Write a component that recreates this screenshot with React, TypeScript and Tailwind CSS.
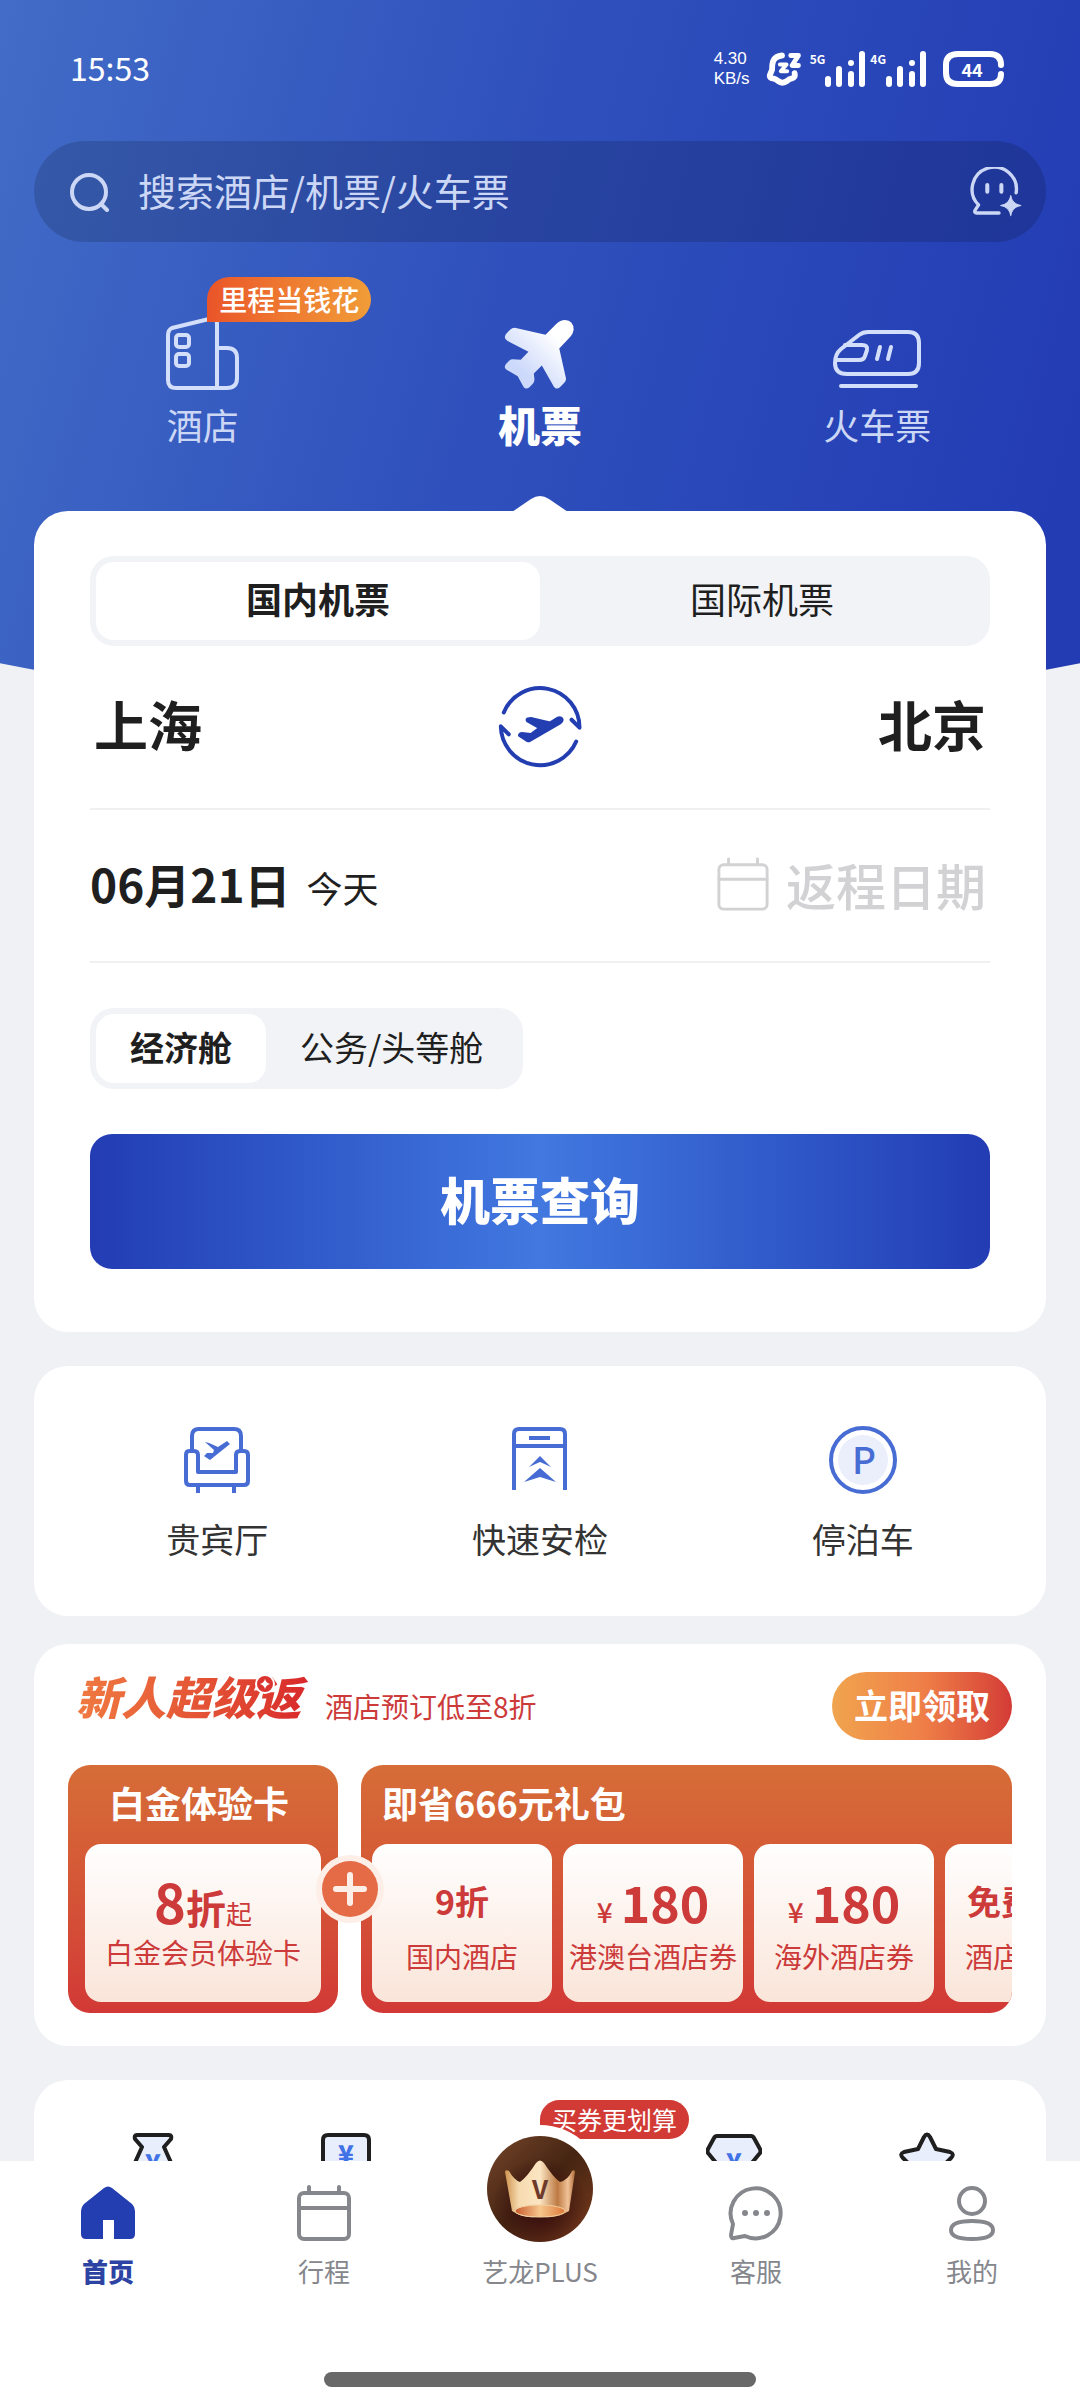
import type { ReactNode } from "react";
import { useState } from "react";

const StatusBar = () => {
  return (
    <div className="flex h-[141px] items-center justify-between pr-[41px] pb-1 pl-9 text-white">
      <span className="pb-1 text-[32px] leading-10">15:53</span>

      <div className="flex items-center">
        <div className="mr-3 w-10 font-['Liberation_Sans',sans-serif] text-[17px] leading-5 whitespace-nowrap">
          <div>4.30</div>
          <div>KB/s</div>
        </div>
        <svg
          viewBox="222 62 112 112"
          className="mr-2 size-9"
          fill="none"
          stroke="currentColor"
          strokeWidth="18"
          strokeLinecap="round"
          strokeLinejoin="round"
        >
          <path d="M272 76C240 79 241 104 241 120L234 137Q232 147 246 148Q254 150 259 155Q273 166 288 155Q293 149 303 147Q314 145 311 131" />
          <path d="M265 104H286L268 125H288" strokeWidth="12" />
          <path d="M299 76H323L303 107H323" strokeWidth="15" />
        </svg>
        <Signal label="5G" />
        <Signal label="4G" />
        <div className="relative ml-3 flex h-9 w-[62px] items-center justify-center">
          <svg
            viewBox="0 0 62 36"
            className="absolute inset-0 size-full"
            fill="none"
            stroke="currentColor"
            strokeWidth="6"
            strokeLinecap="round"
          >
            <path d="M58 14Q58 3 47 3H15Q3 3 3 14V22Q3 33 15 33H47Q58 33 58 23" />
          </svg>
          <span className="pr-1 text-lg leading-5 font-bold">44</span>
        </div>
      </div>
    </div>
  );
};

const Signal = ({ label }: { label: string }) => {
  return (
    <div className="mr-1 flex h-9 items-start">
      <span className="text-[12px] leading-4 font-bold">{label}</span>
      <svg viewBox="0 0 41 36" className="h-9 w-[41px]" fill="currentColor">
        <rect x="0" y="25" width="6" height="11" rx="3" />
        <rect x="11" y="15" width="6" height="21" rx="3" />
        <rect x="23" y="20" width="6" height="16" rx="3" />
        <circle cx="26" cy="12" r="3" />
        <rect x="34" y="0" width="6" height="36" rx="3" />
      </svg>
    </div>
  );
};

const SearchBar = () => {
  return (
    <label className="flex h-[101px] items-center rounded-full bg-black/15 pr-6 pl-9 text-[#ccd7f5]">
      <svg
        viewBox="0 0 40 40"
        className="size-10 shrink-0"
        fill="none"
        stroke="currentColor"
        strokeWidth="4"
        strokeLinecap="round"
      >
        <circle cx="19" cy="20" r="17" />
        <path d="M31 32L37 38" />
      </svg>
      <input
        type="search"
        aria-label="搜索"
        placeholder="搜索酒店/机票/火车票"
        className="ml-7 min-w-0 flex-1 bg-transparent pb-1 text-[38px] leading-[56px] outline-none placeholder:text-[#ccd7f5]"
      />
      <svg
        viewBox="843 410 154 149"
        className="h-[50px] w-[52px] shrink-0"
        fill="none"
        stroke="currentColor"
        strokeWidth="10"
        strokeLinecap="round"
        strokeLinejoin="round"
      >
        <path d="M980 487A66 66 0 1 0 868 523L857 540Q855 547 862 547H929" />
        <path d="M894 464V484M936 464V484" strokeWidth="12" />
        <path
          d="M964 495Q968 521 994 525Q968 529 964 555Q960 529 934 525Q960 521 964 495Z"
          fill="currentColor"
          strokeWidth="3"
        />
      </svg>
    </label>
  );
};

const HotelIcon = () => (
  <svg viewBox="0 0 73 74" className="h-[74px] w-[73px]" fill="none" stroke="#d3defa" strokeWidth="4">
    <path d="M2 19Q2 14 6 12L43 3Q51 1 51 8V72H10Q2 72 2 64Z" strokeLinejoin="round" />
    <path d="M51 32H61Q71 32 71 42V62Q71 72 61 72H51" />
    <rect x="10" y="19" width="13" height="12" rx="3" />
    <rect x="10" y="38" width="13" height="12" rx="3" />
  </svg>
);

const PlaneIcon = () => (
  <svg viewBox="190 53 212 212" className="size-[71px]">
    <defs>
      <linearGradient id="plane" x1="1" y1="0" x2="0" y2="1">
        <stop offset="0.25" stopColor="#ffffff" />
        <stop offset="0.75" stopColor="#cdd9fb" />
      </linearGradient>
    </defs>
    <path
      d="M346 68Q358 56 372 56Q398 58 398 85Q396 98 388 106L355 141L375 230Q376 238 370 243L357 257Q346 265 339 255L303 192L279 216L281 234Q281 241 276 246L266 257Q255 265 248 255L231 224L200 206Q187 199 196 187L206 177Q210 173 216 173L240 175L263 151L201 119Q187 111 196 98L209 84Q214 79 222 79L314 100Z"
      fill="url(#plane)"
    />
  </svg>
);

const TrainIcon = () => (
  <svg
    viewBox="831 326 90 62"
    className="h-[62px] w-[90px]"
    fill="none"
    stroke="#d3defa"
    strokeWidth="4"
    strokeLinecap="round"
    strokeLinejoin="round"
  >
    <path d="M867 330H907Q918 330 918 341V361Q918 372 907 372H846Q834 372 834 361Q834 352 840 347L858 333Q862 330 867 330Z" />
    <path d="M844 343H861Q867 343 866 348L864 354Q863 358 858 358H836" />
    <path d="M879 345L876 357M890 345L887 357" />
    <path d="M840 384H915" />
  </svg>
);

const products = [
  { name: "酒店", icon: <HotelIcon />, badge: "里程当钱花" },
  { name: "机票", icon: <PlaneIcon />, active: true },
  { name: "火车票", icon: <TrainIcon /> },
];

const ProductTabs = () => {
  return (
    <nav className="grid grid-cols-3 pt-[76px]">
      {products.map((item) => (
        <a key={item.name} href="#search" className="flex flex-col items-center">
          <div className="relative flex h-[72px] items-end">
            {item.icon}
            {item.badge && (
              <span className="absolute -top-[41px] left-[41px] rounded-full rounded-bl-md bg-linear-to-r from-[#ea5429] to-[#f09c38] px-3 text-[28px] leading-[45px] font-medium whitespace-nowrap text-white">
                {item.badge}
              </span>
            )}
          </div>
          <span
            className={
              item.active
                ? "mt-2.5 text-[42px] leading-12 font-black text-white"
                : "mt-2.5 text-[36px] leading-12 text-[#ccd7f5]"
            }
          >
            {item.name}
          </span>
        </a>
      ))}
    </nav>
  );
};

const CalendarIcon = ({ className, strokeWidth }: { className: string; strokeWidth: number }) => (
  <svg
    viewBox="0 0 56 56"
    className={className}
    fill="none"
    stroke="currentColor"
    strokeWidth={strokeWidth}
    strokeLinecap="round"
  >
    <rect x="3" y="8" width="50" height="46" rx="5" />
    <path d="M3 23H53M13 2V8M43 2V8" />
  </svg>
);

const SwapIcon = () => (
  <svg
    viewBox="175 1155 253 254"
    className="size-21"
    fill="none"
    stroke="#233eb0"
    strokeWidth="12"
    strokeLinecap="round"
    strokeLinejoin="round"
  >
    <path d="M192 1238A119 119 0 0 1 421 1284L397 1260" />
    <path d="M411 1326A119 119 0 0 1 183 1280L207 1304" />
    <path
      d="M262 1264Q259 1258 264 1256L274 1255L332 1268L354 1254Q369 1250 370 1260Q370 1266 364 1270L270 1325Q266 1326 262 1324L238 1308Q238 1302 246 1300L274 1303L298 1285Z"
      fill="#233eb0"
      strokeWidth="6"
    />
  </svg>
);

const SearchCard = () => {
  const [region, setRegion] = useState("国内机票");
  const [cabin, setCabin] = useState("经济舱");

  return (
    <section id="search" className="relative -mt-[204px] rounded-[34px] bg-white px-14 pt-[45px] pb-[63px] text-[#1f1f1f]">
      <svg viewBox="0 0 56 16" className="absolute -top-[15px] left-1/2 h-4 w-14 -translate-x-1/2" fill="#fff">
        <path d="M0 16L19 3Q28 -3 37 3L56 16Z" />
      </svg>

      {/* Domestic or international */}
      <div className="flex h-[90px] rounded-3xl bg-[#f2f3f7] p-1.5">
        {["国内机票", "国际机票"].map((name) => (
          <button
            key={name}
            onClick={() => setRegion(name)}
            className={
              region === name
                ? "flex-1 rounded-[18px] bg-white pb-1.5 text-[36px] font-bold"
                : "flex-1 rounded-[18px] pb-1.5 text-[36px]"
            }
          >
            {name}
          </button>
        ))}
      </div>

      {/* Cities */}
      <div className="flex h-[164px] items-center justify-between border-b-2 border-[#f0f0f0] px-1 text-[54px] leading-[72px] font-bold">
        <button className="pb-1.5">上海</button>
        <button aria-label="交换城市">
          <SwapIcon />
        </button>
        <button className="pb-1.5">北京</button>
      </div>

      {/* Dates */}
      <div className="flex h-[153px] items-center justify-between border-b-2 border-[#f0f0f0] pr-1">
        <button className="flex items-baseline gap-4 pb-1">
          <span className="text-[46px] leading-[60px] font-bold">06月21日</span>
          <span className="text-[36px]">今天</span>
        </button>
        <button className="flex items-center gap-4 pb-1 text-[50px] leading-[60px] font-medium text-[#d2d2d4]">
          <CalendarIcon className="size-[54px]" strokeWidth={3} />
          返程日期
        </button>
      </div>

      {/* Cabin */}
      <div className="mt-[45px] flex h-[81px] w-fit rounded-3xl bg-[#f2f3f7] p-1.5 text-[34px]">
        {["经济舱", "公务/头等舱"].map((name) => (
          <button
            key={name}
            onClick={() => setCabin(name)}
            className={
              cabin === name ? "rounded-[18px] bg-white px-[34px] pb-1 font-bold" : "rounded-[18px] px-[34px] pb-1"
            }
          >
            {name}
          </button>
        ))}
      </div>

      <button className="mt-[45px] h-[135px] w-full rounded-[22px] bg-linear-to-r from-[#233cb4] via-[#4278e0] to-[#233cb4] pb-1.5 text-[50px] font-black text-white">
        机票查询
      </button>
    </section>
  );
};

const services = [
  {
    name: "贵宾厅",
    icon: (
      <svg viewBox="184 1427 68 68" className="size-[68px]" fill="none" stroke="#476cd3" strokeWidth="4">
        <path d="M193 1452V1437Q193 1430 200 1430H235Q242 1430 242 1437V1452" />
        <path d="M199 1473V1456Q199 1452 195 1452H190Q187 1452 187 1456V1482Q187 1486 191 1486H245Q249 1486 249 1482V1456Q249 1452 245 1452H241Q237 1452 237 1456V1473Z" strokeLinejoin="round" />
        <path d="M199 1486V1494M235 1486V1494" />
        <path d="M206 1443L210 1444L219 1448L228 1442L231 1445L211 1461L205 1457L208 1454L214 1454L215 1451Z" fill="#476cd3" stroke="none" />
      </svg>
    ),
  },
  {
    name: "快速安检",
    icon: (
      <svg viewBox="506 1427 68 68" className="size-[68px]" fill="none" stroke="#476cd3" strokeWidth="4">
        <path d="M514 1491V1435Q514 1430 519 1430H560Q565 1430 565 1435V1491M514 1447H565M529 1439H550" />
        <path d="M540 1457L551 1468L540 1463L529 1468ZM540 1469L556 1483L540 1478L524 1483Z" fill="#476cd3" stroke="none" />
      </svg>
    ),
  },
  {
    name: "停泊车",
    icon: (
      <svg viewBox="0 0 68 68" className="size-[68px]">
        <circle cx="34" cy="34" r="32" fill="none" stroke="#476cd3" strokeWidth="4" />
        <circle cx="34" cy="34" r="25" fill="#eaeffb" />
        <text x="35" y="48" textAnchor="middle" fontSize="37" fontWeight="500" fill="#476cd3">
          P
        </text>
      </svg>
    ),
  },
];

const Services = () => {
  return (
    <section className="mt-[34px] grid grid-cols-3 rounded-[34px] bg-white px-[22px] pt-[60px] pb-[52px]">
      {services.map((item) => (
        <a key={item.name} href="#services" className="flex flex-col items-center text-[34px] leading-[50px] text-[#333]">
          {item.icon}
          <span className="mt-5">{item.name}</span>
        </a>
      ))}
    </section>
  );
};

const Price = ({ amount }: { amount: string }) => (
  <span className="flex items-baseline justify-center gap-2">
    <span className="text-[28px] font-medium">¥</span>
    <span className="text-[50px] font-bold">{amount}</span>
  </span>
);

const coupons: { value: ReactNode; name: string }[] = [
  { value: "9折", name: "国内酒店" },
  { value: <Price amount="180" />, name: "港澳台酒店券" },
  { value: <Price amount="180" />, name: "海外酒店券" },
  { value: "免费取消", name: "酒店取消券" },
];

const Promo = () => {
  return (
    <section className="mt-7 rounded-[34px] bg-white px-[34px] pt-7 pb-[33px] text-[#cc3a3a]">
      <div className="flex h-[68px] items-center">
        <h2 className="relative ml-2 bg-linear-to-r from-[#f07a41] to-[#d8272b] bg-clip-text pr-2 pb-5 text-[45px] leading-[60px] font-black text-transparent italic">
          新人超级返
          <svg viewBox="0 0 20 20" className="absolute top-2 right-[34px] size-5">
            <circle cx="10" cy="10" r="9" fill="#da3430" stroke="#fff" strokeWidth="2" />
            <path d="M10 5Q11 9 15 10Q11 11 10 15Q9 11 5 10Q9 9 10 5Z" fill="#fff" />
          </svg>
        </h2>
        <span className="ml-4 text-[28px] leading-9">酒店预订低至8折</span>
        <button className="ml-auto h-[68px] rounded-full bg-linear-to-r from-[#f0a44e] via-[#ef7f48] to-[#d33a36] px-[22px] pb-1 text-[34px] font-bold text-white">
          立即领取
        </button>
      </div>

      <div className="relative mt-[25px] flex h-[248px] gap-[23px]">
        <div className="flex w-[270px] shrink-0 flex-col rounded-[22px] bg-linear-to-b from-[#d66d37] to-[#d23836] px-[17px] pb-[11px]">
          <h3 className="h-[79px] px-6 text-[36px] leading-[74px] font-bold whitespace-nowrap text-white">
            白金体验卡
          </h3>
          <div className="flex flex-1 flex-col items-center rounded-2xl bg-linear-to-b from-white to-[#fae5d9] pt-6">
            <p className="h-[66px] leading-[66px]">
              <span className="text-[54px] font-bold">8</span>
              <span className="text-[40px] font-bold">折</span>
              <span className="text-[26px]">起</span>
            </p>
            <p className="text-[28px] leading-9 whitespace-nowrap">白金会员体验卡</p>
          </div>
        </div>

        <div className="flex min-w-0 flex-1 flex-col overflow-hidden rounded-[22px] bg-linear-to-b from-[#d66d37] to-[#d23836] pb-[11px] pl-[11px]">
          <h3 className="h-[79px] px-2.5 text-[36px] leading-[74px] font-bold text-white">即省666元礼包</h3>
          <ul className="flex flex-1 gap-[11px]">
            {coupons.map((item) => (
              <li
                key={item.name}
                className="flex w-[180px] shrink-0 flex-col items-center rounded-2xl bg-linear-to-b from-white to-[#fae5d9] pt-6 whitespace-nowrap"
              >
                <div className="h-[66px] text-[34px] leading-[66px] font-bold">{item.value}</div>
                <div className="mt-1 text-[28px] leading-9">{item.name}</div>
              </li>
            ))}
          </ul>
        </div>

        {/* Sits on the seam between the two cards */}
        <svg viewBox="0 0 68 68" className="absolute top-[90px] left-[248px] size-[68px]">
          <circle cx="34" cy="34" r="34" fill="#fdeee7" />
          <circle cx="34" cy="34" r="28" fill="#e56a46" />
          <path d="M34 20V48M20 34H48" stroke="#fdeee7" strokeWidth="6" strokeLinecap="round" />
        </svg>
      </div>
    </section>
  );
};

const benefitShapes = [
  {
    name: "钱袋",
    path: "M12 3H44Q47 3 46 7L39 15L52 44Q54 53 46 53H10Q2 53 4 44L17 15L10 7Q9 3 12 3Z",
    y: 41,
    column: "col-start-1",
  },
  {
    name: "红包",
    path: "M10 3H46Q51 3 51 8V48Q51 53 46 53H10Q5 53 5 48V8Q5 3 10 3Z",
    y: 32,
    column: "col-start-2",
  },
  {
    name: "钻石",
    path: "M11 4H45Q47 4 48 6L54 17Q55 19 54 21L31 49Q28 52 25 49L2 21Q1 19 2 17L8 6Q9 4 11 4Z",
    y: 40,
    column: "col-start-4",
  },
  {
    name: "收藏",
    path: "M25 5Q28 0 31 5L37 17L51 20Q56 22 52 26L43 35L45 49Q45 54 40 52L28 46L16 52Q11 54 11 49L13 35L4 26Q0 22 5 20L19 17Z",
    y: 0,
    column: "col-start-5",
  },
];

const Benefits = () => {
  return (
    <section className="mt-[34px] grid grid-cols-5 justify-items-center rounded-[34px] bg-white px-[22px] pt-[52px] pb-12">
      {benefitShapes.map((item) => (
        <a key={item.name} href="#benefits" aria-label={item.name} className={item.column}>
          <svg viewBox="0 0 56 56" className="size-14">
            <path d={item.path} fill="#e9eefd" stroke="#1f1f1f" strokeWidth="4" strokeLinejoin="round" />
            {item.y > 0 && (
              <text x="28" y={item.y} textAnchor="middle" fontSize="26" fontWeight="900" fill="#4173e6">
                ¥
              </text>
            )}
          </svg>
        </a>
      ))}
    </section>
  );
};

const HomeIcon = () => (
  <svg viewBox="0 0 56 56" className="size-14" fill="#233eb0">
    <path d="M24 3Q28 0 32 3L52 19Q55 22 55 26V49Q55 54 50 54H34V35H23V54H6Q1 54 1 49V26Q1 22 4 19Z" />
  </svg>
);

const ChatIcon = () => (
  <svg viewBox="0 0 56 56" className="size-14" fill="none" stroke="currentColor" strokeWidth="4" strokeLinejoin="round">
    <path d="M5 39A25 25 0 1 1 17 51L6 53Q3 54 3 50Z" />
    <g fill="currentColor" stroke="none">
      <circle cx="17" cy="28" r="3" />
      <circle cx="28" cy="28" r="3" />
      <circle cx="39" cy="28" r="3" />
    </g>
  </svg>
);

const PersonIcon = () => (
  <svg viewBox="0 0 56 56" className="size-14" fill="none" stroke="currentColor" strokeWidth="4">
    <circle cx="28" cy="16" r="13" />
    <path d="M28 36Q49 36 49 45Q49 54 28 54Q7 54 7 45Q7 36 28 36Z" />
  </svg>
);

const PlusIcon = () => (
  <div className="relative size-14">
    <span className="absolute bottom-[102px] left-7 h-[39px] rounded-full rounded-bl-none bg-[#d23a36] px-3 text-[25px] leading-[38px] whitespace-nowrap text-white">
      买券更划算
    </span>
    <svg viewBox="0 0 128 128" className="absolute -bottom-3 left-1/2 size-32 max-w-none -translate-x-1/2">
      <defs>
        <linearGradient id="disc" x1="0" y1="0" x2="1" y2="1">
          <stop offset="0" stopColor="#75452a" />
          <stop offset="0.5" stopColor="#452512" />
          <stop offset="1" stopColor="#7a3a1c" />
        </linearGradient>
        <radialGradient id="shade" cx="0.5" cy="0.65" r="0.45">
          <stop offset="0" stopColor="#33080c" />
          <stop offset="1" stopColor="#33080c" stopOpacity="0" />
        </radialGradient>
        <linearGradient id="gold" x1="0" y1="0" x2="1" y2="0">
          <stop offset="0" stopColor="#cf934f" />
          <stop offset="0.2" stopColor="#f6dbb0" />
          <stop offset="0.5" stopColor="#fbe5c2" />
          <stop offset="0.75" stopColor="#bd7a44" />
          <stop offset="0.9" stopColor="#f0c398" />
          <stop offset="1" stopColor="#b06a38" />
        </linearGradient>
        <linearGradient id="rim" x1="0" y1="0" x2="1" y2="0">
          <stop offset="0" stopColor="#c85a2c" />
          <stop offset="0.5" stopColor="#f6c78d" />
          <stop offset="1" stopColor="#dd7838" />
        </linearGradient>
      </defs>
      <circle cx="64" cy="64" r="64" fill="#fff" />
      <circle cx="64" cy="64" r="53" fill="url(#disc)" />
      <circle cx="64" cy="64" r="53" fill="url(#shade)" />
      <path d="M29 47Q29 44 33 46Q38 55 44 57Q51 52 60 38Q64 33 68 38Q77 52 84 57Q92 55 96 46Q99 44 99 47L93 86Q78 95 64 91Q50 95 36 86Z" fill="url(#gold)" />
      <ellipse cx="64" cy="86" rx="25" ry="6" fill="url(#rim)" stroke="#f3cf9f" strokeWidth="1" />
      <text x="64" y="74" textAnchor="middle" fontSize="26" fontWeight="700" fill="#6e3a2b">
        V
      </text>
    </svg>
  </div>
);

const tabs = [
  { name: "首页", icon: <HomeIcon />, active: true },
  { name: "行程", icon: <CalendarIcon className="size-14" strokeWidth={4} /> },
  { name: "艺龙PLUS", icon: <PlusIcon /> },
  { name: "客服", icon: <ChatIcon /> },
  { name: "我的", icon: <PersonIcon /> },
];

const TabBar = () => {
  return (
    <footer className="relative z-10 bg-white pt-6 pb-[13px]">
      <nav className="grid grid-cols-5">
        {tabs.map((item) => (
          <a
            key={item.name}
            href="#home"
            className={
              item.active
                ? "flex flex-col items-center text-[26px] leading-9 font-black text-[#2c43a4]"
                : "flex flex-col items-center text-[26px] leading-9 text-[#85878d]"
            }
          >
            {item.icon}
            <span className="mt-3">{item.name}</span>
          </a>
        ))}
      </nav>
      <div className="mx-auto mt-[83px] h-[15px] w-[40%] rounded-full bg-[#686868]" />
    </footer>
  );
};

const App = () => {
  return (
    <div className="flex h-screen flex-col bg-[#f0f1f4] font-['Noto_Sans_CJK_SC',sans-serif]">
      <main className="min-h-0 flex-1 overflow-y-auto [scrollbar-width:none]">
        <header className="h-[715px] bg-[linear-gradient(105deg,#426cc7_0%,#3052bd_42%,#233cb4_94%)] px-[34px] [clip-path:ellipse(134%_100%_at_50%_0%)]">
          <StatusBar />
          <SearchBar />
          <ProductTabs />
        </header>
        <div className="px-[34px]">
          <SearchCard />
          <Services />
          <Promo />
          <Benefits />
        </div>
      </main>
      <TabBar />
    </div>
  );
};

export default App;
